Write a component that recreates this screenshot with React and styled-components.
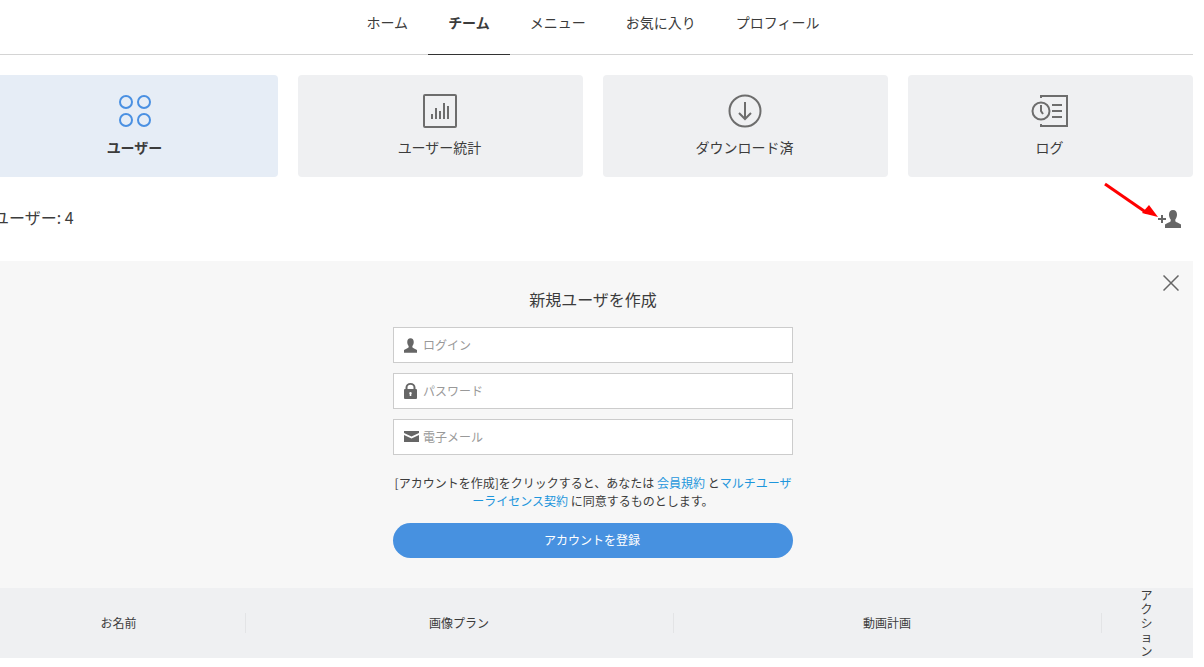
import styled, { createGlobalStyle } from "styled-components";

const GlobalStyle = createGlobalStyle`
  html, body {
    margin: 0;
    background: #fff;
    overflow: hidden;
  }
  body {
    font-family: "Noto Sans CJK JP", "Noto Sans", sans-serif;
    color: #3c3c3c;
  }
`;

const NAV_ITEMS = ["ホーム", "チーム", "メニュー", "お気に入り", "プロフィール"];

const GridIcon = () => (
  <svg width="34" height="34" viewBox="0 0 34 34" fill="none" stroke="#4a90e2" strokeWidth="2">
    <circle cx="8" cy="8" r="6" />
    <circle cx="26" cy="8" r="6" />
    <circle cx="8" cy="26" r="6" />
    <circle cx="26" cy="26" r="6" />
  </svg>
);

const ChartIcon = () => (
  <svg width="34" height="34" viewBox="0 0 34 34" fill="none" stroke="#6d6d6d" strokeWidth="2">
    <rect x="1" y="1" width="32" height="32" rx="1" />
    <path d="M9 25v-5M13 25V14M17 25v-8M21 25V9M25 25V12" />
  </svg>
);

const DownloadIcon = () => (
  <svg width="34" height="34" viewBox="0 0 34 34" fill="none" stroke="#6d6d6d" strokeWidth="2">
    <circle cx="17" cy="17" r="15.500" />
    <path d="M17 8v17M11 19l6 6 6-6" />
  </svg>
);

const LogIcon = () => (
  <svg width="38" height="34" viewBox="0 0 38 34" fill="none" stroke="#6d6d6d" strokeWidth="2">
    <path d="M10 4V2h26v30H10v-2" />
    <circle cx="10" cy="17" r="8.500" fill="#eff0f2" />
    <path d="M10 11v6l2 3M21 11h10M21 17h10M21 23h10" />
  </svg>
);

const PersonShape = () => (
  <path d="M8 0c2.600 0 4 2 4 4.600 0 2-.7 3.700-1.700 4.900v1.600c0 1 3.700 2 5.700 3.400V18H0v-3.500c2-1.400 5.700-2.400 5.700-3.400V9.500C4.700 8.300 4 6.600 4 4.600 4 2 5.400 0 8 0z" />
);

const AddUserIcon = () => (
  <svg width="24" height="18" viewBox="0 0 24 18" fill="#666">
    <path d="M0 8h8v2H0zM3 5h2v8H3z" />
    <g transform="translate(7 0)">
      <PersonShape />
    </g>
  </svg>
);

const UserFieldIcon = () => (
  <svg width="13" height="15" viewBox="0 0 16 18" fill="#666">
    <PersonShape />
  </svg>
);

const LockIcon = () => (
  <svg width="13" height="16" viewBox="0 0 13 16">
    <path
      fill="#666"
      fillRule="evenodd"
      d="M1.500 6V4.500a5 4.500 0 0 1 10 0V6h.5a1 1 0 0 1 1 1v8a1 1 0 0 1-1 1H1a1 1 0 0 1-1-1V7a1 1 0 0 1 1-1zM3.500 6h6V4.500a3 2.700 0 0 0-6 0zM6.500 9a1.300 1.300 0 0 0-.8 2.300V13h1.600v-1.700A1.300 1.300 0 0 0 6.500 9z"
    />
  </svg>
);

const MailIcon = () => (
  <MailSvg width="15" height="11" viewBox="0 0 15 11" fill="#666">
    <path d="M0 0h15v2L7.500 5.500 0 2zM0 4l7.500 3.500L15 4v7H0z" />
  </MailSvg>
);

const TABS = [
  { label: "ユーザー", icon: <GridIcon />, active: true },
  { label: "ユーザー統計", icon: <ChartIcon /> },
  { label: "ダウンロード済", icon: <DownloadIcon /> },
  { label: "ログ", icon: <LogIcon /> },
];

const FIELDS = [
  { placeholder: "ログイン", type: "text", icon: <UserFieldIcon /> },
  { placeholder: "パスワード", type: "password", icon: <LockIcon /> },
  { placeholder: "電子メール", type: "email", icon: <MailIcon /> },
];

const App = () => {
  return (
    <Shell>
      <GlobalStyle />
      <Page>
        <Nav>
          {NAV_ITEMS.map((item) => (
            <NavItem key={item} $active={item === "チーム"}>
              {item}
            </NavItem>
          ))}
        </Nav>

        <Tabs>
          {TABS.map((tab) => (
            <Tab key={tab.label} $active={tab.active}>
              <TabIcon>{tab.icon}</TabIcon>
              <TabLabel $active={tab.active}>{tab.label}</TabLabel>
            </Tab>
          ))}
        </Tabs>

        <CountRow>
          <CountText>ユーザー: 4</CountText>
          <AddUserIcon />
          <Annotation width="60" height="40" viewBox="0 0 60 40">
            <path d="M4 2l42 29" stroke="#f00" strokeWidth="3" />
            <path d="M57 35l-16-4 7-8z" fill="#f00" />
          </Annotation>
        </CountRow>

        <FormPanel>
          <CloseButton type="button" aria-label="閉じる">
            <svg width="16" height="16" viewBox="0 0 16 16" stroke="#666" strokeWidth="1.500">
              <path d="M.5.5l15 15M15.500.5l-15 15" />
            </svg>
          </CloseButton>
          <FormTitle>新規ユーザを作成</FormTitle>
          <Form>
            {FIELDS.map((field) => (
              <Field key={field.placeholder}>
                <FieldIcon>{field.icon}</FieldIcon>
                <FieldInput type={field.type} placeholder={field.placeholder} />
              </Field>
            ))}
            <Terms>
              [アカウントを作成]をクリックすると、あなたは <TermsLink>会員規約</TermsLink> と
              <TermsLink>マルチユーザーライセンス契約</TermsLink> に同意するものとします。
            </Terms>
            <SubmitButton type="button">アカウントを登録</SubmitButton>
          </Form>
        </FormPanel>

        <TableHead>
          <HeadCell>お名前</HeadCell>
          <HeadCell>画像プラン</HeadCell>
          <HeadCell>動画計画</HeadCell>
          <HeadCell>
            <NarrowText>アクション</NarrowText>
          </HeadCell>
        </TableHead>
      </Page>
    </Shell>
  );
};

const Shell = styled.div`
  width: 1193px;
  height: 667px;
  overflow: hidden;
`;

const Page = styled.div`
  width: 1200px;
  margin-left: -7px;
`;

const Nav = styled.nav`
  display: flex;
  justify-content: center;
  height: 54px;
  border-bottom: 1px solid #d4d4d4;
`;

const NavItem = styled.a`
  padding: 0 20px;
  height: 55px;
  box-sizing: border-box;
  font-size: 14px;
  line-height: 44px;
  font-weight: ${(p) => (p.$active ? 700 : 400)};
  border-bottom: 1px solid ${(p) => (p.$active ? "#333" : "transparent")};
`;

const Tabs = styled.div`
  display: grid;
  grid-template-columns: repeat(4, 285px);
  gap: 20px;
  margin-top: 20px;
`;

const Tab = styled.div`
  height: 102px;
  box-sizing: border-box;
  padding-top: 19px;
  border-radius: 4px;
  background: ${(p) => (p.$active ? "#e6edf6" : "#eff0f2")};
  display: flex;
  flex-direction: column;
  align-items: center;
`;

const TabIcon = styled.div`
  height: 34px;
  margin-right: 2px;
  display: flex;
`;

const TabLabel = styled.div`
  margin: 7px 2px 0 0;
  font-size: 14px;
  line-height: 24px;
  font-weight: ${(p) => (p.$active ? 700 : 400)};
`;

const CountRow = styled.div`
  position: relative;
  height: 84px;
  padding-right: 11px;
  display: flex;
  justify-content: space-between;
  align-items: center;
`;

const CountText = styled.span`
  font-size: 16px;
  line-height: 24px;
  margin-bottom: 4px;
`;

const Annotation = styled.svg`
  position: absolute;
  top: 5px;
  right: 32px;
`;

const FormPanel = styled.section`
  position: relative;
  box-sizing: border-box;
  height: 327px;
  padding-top: 27px;
  background: #f7f7f7;
  display: flex;
  flex-direction: column;
  align-items: center;
`;

const CloseButton = styled.button`
  position: absolute;
  top: 14px;
  right: 14px;
  padding: 0;
  border: none;
  background: none;
  display: flex;
`;

const FormTitle = styled.h2`
  margin: -1px 0 16px;
  font-size: 16px;
  line-height: 24px;
  font-weight: 400;
`;

const Form = styled.form`
  width: 400px;
  display: flex;
  flex-direction: column;
  gap: 10px;
`;

const Field = styled.label`
  height: 36px;
  box-sizing: border-box;
  border: 1px solid #ccc;
  background: #fff;
  display: flex;
  align-items: center;
`;

const FieldIcon = styled.span`
  width: 29px;
  padding-left: 10px;
  box-sizing: border-box;
  display: flex;
`;

const MailSvg = styled.svg`
  margin-top: -2px;
`;

const FieldInput = styled.input`
  flex: 1;
  border: none;
  outline: none;
  padding: 0 0 2px;
  background: none;
  font-family: inherit;
  font-size: 12px;
  &::placeholder {
    color: #999;
  }
`;

const Terms = styled.p`
  margin: 9px 0 3px;
  font-size: 12px;
  line-height: 18px;
  text-align: center;
`;

const TermsLink = styled.a`
  color: #1e96dc;
`;

const SubmitButton = styled.button`
  height: 35px;
  padding: 0 2px 2px 0;
  border: none;
  border-radius: 18px;
  background: #4791e0;
  color: #fff;
  font-family: inherit;
  font-size: 12px;
`;

const TableHead = styled.div`
  display: grid;
  grid-template-columns: 253px 428px 428px 91px;
  background: #eff0f2;
`;

const HeadCell = styled.div`
  display: flex;
  align-items: center;
  justify-content: center;
  padding: 0 2px 2px 0;
  font-size: 12px;
  background: linear-gradient(#e3e4e6, #e3e4e6) right center / 1px 20px no-repeat;
  &:last-child {
    background: none;
    padding: 0 2px 0 0;
  }
`;

const NarrowText = styled.span`
  width: 14px;
  line-height: 14px;
  text-align: center;
`;

export default App;
